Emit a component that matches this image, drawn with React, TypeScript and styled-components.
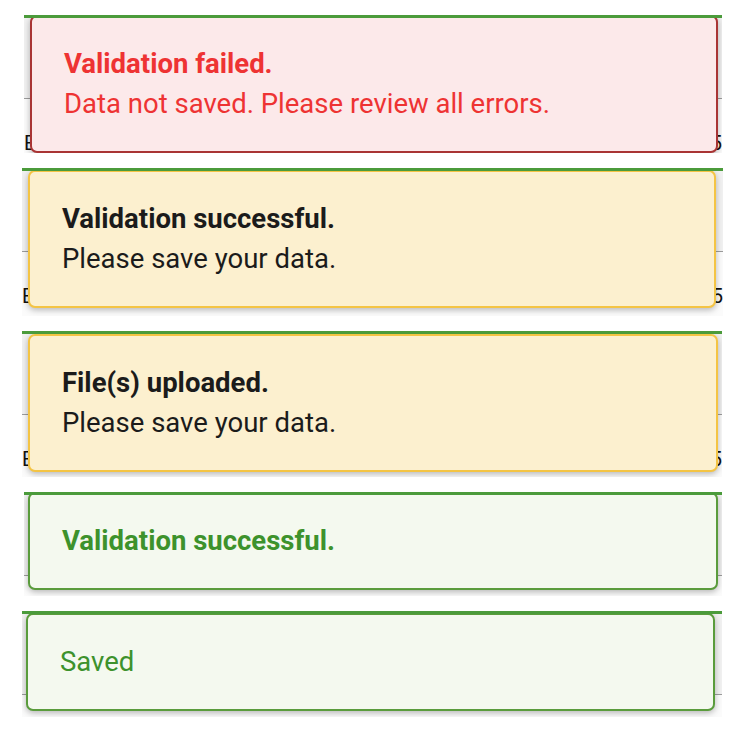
import React from 'react';
import styled, { createGlobalStyle, css } from 'styled-components';

type Variant = 'error' | 'warning' | 'success';

const GlobalStyle = createGlobalStyle`
    html, body {
        margin: 0;
        padding: 0;
        background: #ffffff;
    }
    body {
        font-family: Roboto, 'Liberation Sans', sans-serif;
    }
`;

const Page = styled.div`
    display: flex;
    flex-direction: column;
    gap: 15px;
    padding-top: 15px;
    width: 740px;
    height: 730px;
    box-sizing: border-box;
`;

const Frame = styled.div<{ $h: number; $left: number; $width: number }>`
    position: relative;
    margin-left: ${(p) => p.$left}px;
    width: ${(p) => p.$width}px;
    height: ${(p) => p.$h}px;
    box-sizing: border-box;
    border-top: 3px solid #4b9b3b;
    background: #fbfbfb;
    overflow: hidden;
    display: flex;
    flex-direction: column;
`;

const HeaderRow = styled.div`
    height: 80px;
    flex-shrink: 0;
    background: #f1f1f1;
    border-bottom: 1px solid #9c9c9c;
`;

const BodyRow = styled.div`
    display: grid;
    grid-template-columns: 110px 370px 1fr auto;
    padding-top: 33px;
    font-size: 20px;
    line-height: 22px;
    color: #111;
`;

const Cell = styled.span`
    display: block;
    white-space: nowrap;
`;

const variants = {
    error: css`
        background: #fce9ea;
        border-color: #a93434;
        color: #ee3333;
    `,
    warning: css`
        background: #fcf0cf;
        border-color: #f4c444;
        color: #1b1b1b;
    `,
    success: css`
        background: #f4f9ef;
        border-color: #5a9c3c;
        color: #3d922c;
    `,
};

const Toast = styled.div<{ $variant: Variant; $top: number; $left: number; $right: number }>`
    position: absolute;
    top: ${(p) => p.$top}px;
    left: ${(p) => p.$left}px;
    right: ${(p) => p.$right}px;
    box-sizing: border-box;
    padding: 27px 32px;
    border: 2px solid;
    border-radius: 7px;
    box-shadow: 0 2px 6px rgba(0, 0, 0, 0.28);
    font-size: 27.5px;
    line-height: 40px;
    ${(p) => variants[p.$variant]}
`;

const Title = styled.div`
    font-weight: 700;
`;

const Body = styled.div`
    font-weight: 400;
`;

type Strip = {
    variant: Variant;
    title?: string;
    body?: string;
    h: number;
    left: number;
    width: number;
    top: number;
    tLeft: number;
    tRight: number;
    row: boolean;
};

const strips: Strip[] = [
    { variant: 'error', title: 'Validation failed.', body: 'Data not saved. Please review all errors.', h: 138, left: 24, width: 698, top: -3, tLeft: 6, tRight: 4, row: true },
    { variant: 'warning', title: 'Validation successful.', body: 'Please save your data.', h: 148, left: 22, width: 701, top: -1, tLeft: 6, tRight: 7, row: true },
    { variant: 'warning', title: 'File(s) uploaded.', body: 'Please save your data.', h: 146, left: 22, width: 700, top: 0, tLeft: 6, tRight: 4, row: true },
    { variant: 'success', title: 'Validation successful.', h: 104, left: 24, width: 698, top: -3, tLeft: 4, tRight: 4, row: false },
    { variant: 'success', body: 'Saved', h: 106, left: 22, width: 700, top: -1, tLeft: 4, tRight: 7, row: false },
];

export default function App() {
    return (
        <>
            <GlobalStyle />
            <Page>
                {strips.map((s, i) => (
                    <Frame key={i} $h={s.h} $left={s.left} $width={s.width}>
                        <HeaderRow />
                        {s.row && (
                            <BodyRow>
                                <Cell>E</Cell>
                                <Cell>Supplier</Cell>
                                <Cell>(1)</Cell>
                                <Cell>5</Cell>
                            </BodyRow>
                        )}
                        <Toast $variant={s.variant} $top={s.top} $left={s.tLeft} $right={s.tRight}>
                            {s.title && <Title>{s.title}</Title>}
                            {s.body && <Body>{s.body}</Body>}
                        </Toast>
                    </Frame>
                ))}
            </Page>
        </>
    );
}
